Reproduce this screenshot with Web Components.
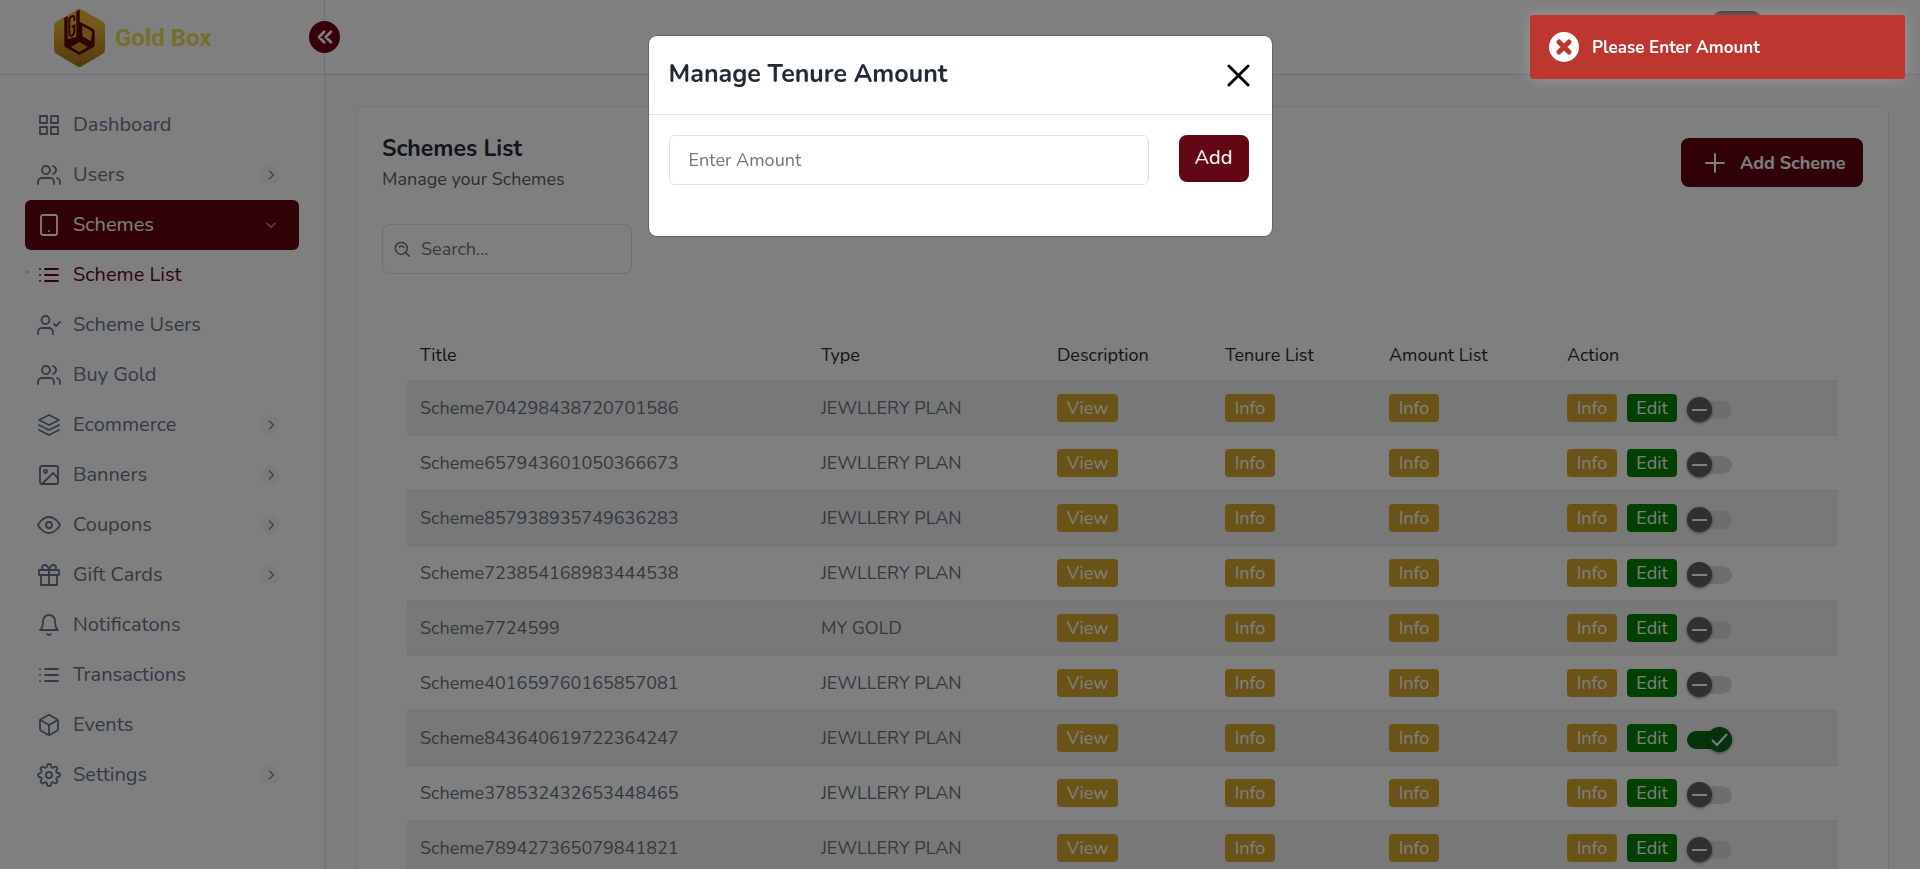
<!DOCTYPE html>
<html lang="en">
<head>
<meta charset="utf-8">
<title>Gold Box - Schemes</title>
<style>
  html, body { margin: 0; height: 100%; }
  body { font-family: Nunito, Lato, sans-serif; font-size: 18px; background: #fafafe; overflow: hidden; }
</style>
</head>
<body>
<gold-app></gold-app>
<script>
const ICONS = {
  grid: '<rect x="3" y="3" width="7" height="7"/><rect x="14" y="3" width="7" height="7"/><rect x="14" y="14" width="7" height="7"/><rect x="3" y="14" width="7" height="7"/>',
  users: '<path d="M17 21v-2a4 4 0 0 0-4-4H5a4 4 0 0 0-4 4v2"/><circle cx="9" cy="7" r="4"/><path d="M23 21v-2a4 4 0 0 0-3-3.87M16 3.13a4 4 0 0 1 0 7.75"/>',
  tablet: '<rect x="4" y="2" width="16" height="20" rx="2"/><path d="M12 18h.01"/>',
  list: '<path d="M8 6h13M8 12h13M8 18h13M3 6h.01M3 12h.01M3 18h.01"/>',
  usercheck: '<path d="M16 21v-2a4 4 0 0 0-4-4H5a4 4 0 0 0-4 4v2"/><circle cx="8.5" cy="7" r="4"/><path d="M17 11l2 2 4-4"/>',
  layers: '<path d="M12 2L2 7l10 5 10-5-10-5zM2 17l10 5 10-5M2 12l10 5 10-5"/>',
  image: '<rect x="3" y="3" width="18" height="18" rx="2"/><circle cx="8.5" cy="8.5" r="1.5"/><path d="M21 15l-5-5L5 21"/>',
  eye: '<path d="M1 12s4-8 11-8 11 8 11 8-4 8-11 8-11-8-11-8z"/><circle cx="12" cy="12" r="3"/>',
  gift: '<path d="M20 12v10H4V12M2 7h20v5H2zM12 22V7M12 7H7.5a2.5 2.5 0 0 1 0-5C11 2 12 7 12 7zM12 7h4.5a2.5 2.5 0 0 0 0-5C13 2 12 7 12 7z"/>',
  bell: '<path d="M18 8A6 6 0 0 0 6 8c0 7-3 9-3 9h18s-3-2-3-9M13.73 21a2 2 0 0 1-3.46 0"/>',
  box: '<path d="M21 16V8a2 2 0 0 0-1-1.73l-7-4a2 2 0 0 0-2 0l-7 4A2 2 0 0 0 3 8v8a2 2 0 0 0 1 1.73l7 4a2 2 0 0 0 2 0l7-4A2 2 0 0 0 21 16z"/><path d="M3.27 6.96L12 12.01l8.73-5.05M12 22.08V12"/>',
  settings: '<circle cx="12" cy="12" r="3"/><path d="M19.4 15a1.65 1.65 0 0 0 .33 1.82l.06.06a2 2 0 1 1-2.83 2.83l-.06-.06a1.65 1.65 0 0 0-1.82-.33 1.65 1.65 0 0 0-1 1.51V21a2 2 0 0 1-4 0v-.09A1.65 1.65 0 0 0 9 19.4a1.65 1.65 0 0 0-1.82.33l-.06.06a2 2 0 1 1-2.83-2.83l.06-.06a1.65 1.65 0 0 0 .33-1.82 1.65 1.65 0 0 0-1.51-1H3a2 2 0 0 1 0-4h.09A1.65 1.65 0 0 0 4.6 9a1.65 1.65 0 0 0-.33-1.82l-.06-.06a2 2 0 1 1 2.83-2.83l.06.06a1.65 1.65 0 0 0 1.82.33H9a1.65 1.65 0 0 0 1-1.51V3a2 2 0 0 1 4 0v.09a1.65 1.65 0 0 0 1 1.51 1.65 1.65 0 0 0 1.82-.33l.06-.06a2 2 0 1 1 2.83 2.83l-.06.06a1.65 1.65 0 0 0-.33 1.82V9a1.65 1.65 0 0 0 1.51 1H21a2 2 0 0 1 0 4h-.09a1.65 1.65 0 0 0-1.51 1z"/>',
  plus: '<path d="M12 3v18M3 12h18"/>',
  close: '<path d="M2 2l20 20M22 2L2 22"/>',
  right: '<path d="M9 5l7 7-7 7"/>',
  down: '<path d="M5 9l7 7 7-7"/>',
  dleft: '<path d="M11 5l-7 7 7 7M20 5l-7 7 7 7"/>',
  search: '<circle cx="11" cy="11" r="9"/><path d="M17.5 17.5L23 23M8 9q4-4 7 1"/>'
};

function define(name, css, html, setup) {
  const template = document.createElement('template');
  template.innerHTML = `<style>*{box-sizing:border-box}${css}</style>${html}`;
  customElements.define(name, class extends HTMLElement {
    connectedCallback() {
      if (this.shadowRoot) return;
      const root = this.attachShadow({ mode: 'open' });
      root.append(template.content.cloneNode(true));
      if (setup) setup(this, root);
    }
  });
}

/* Line icon: name, size and stroke attributes */
define('line-icon', ':host{display:inline-flex;flex:none}svg{fill:none;stroke:currentColor;stroke-linecap:round;stroke-linejoin:round}',
  '<svg viewBox="0 0 24 24" aria-hidden="true"></svg>', (el, root) => {
    const svg = root.querySelector('svg');
    const size = el.getAttribute('size') || 24;
    svg.setAttribute('width', size);
    svg.setAttribute('height', size);
    svg.setAttribute('stroke-width', el.getAttribute('stroke') || 1.8);
    svg.innerHTML = ICONS[el.getAttribute('name')];
  });

define('brand-logo', `
  :host{display:block}
  a{display:flex;align-items:center;gap:10px;color:#ecdc58;text-decoration:none;font:700 24px/28px Roboto,sans-serif}
  `, `<a href="#"><svg width="51" height="58" viewBox="0 0 153 174" aria-hidden="true">
    <defs><linearGradient id="g" x1="0" y1="0" x2="0" y2="1"><stop offset="0" stop-color="#edb233"/><stop offset=".25" stop-color="#e9b636"/><stop offset="1" stop-color="#a87418"/></linearGradient></defs>
    <path fill="url(#g)" d="M67 4Q76-2 86 4L144 37Q153 42 153 52V121Q153 131 144 136L86 170Q76 177 67 170L9 136Q0 131 0 121V52Q0 42 9 37Z"/>
    <path fill="#620713" d="M31 27L41 21V90L67 84V8L77 0V38L118 60Q122 63 122 68V108Q122 113 118 115L80 136Q76 139 72 136L35 115Q31 113 31 108Z"/>
    <path fill="#d9a32e" d="M85 50L111 65Q114 67 114 70L111 96L88 84Q85 82 85 78Z"/>
    <path fill="#bd8a24" d="M76 99L101 114L76 129L51 114Z"/>
    <path fill="none" stroke="#620713" stroke-width="6" d="M61 36V28Q61 18 53 22Q46 26 46 34V72Q46 84 54 80Q61 76 61 66V50L53 54"/>
  </svg><span>Gold Box</span></a>`);

define('nav-item', `
  :host{display:block}
  a{display:flex;align-items:center;height:50px;padding:0 19px 0 12px;border-radius:6px;color:#64748b;text-decoration:none;font-size:20px;line-height:24px;gap:12px;position:relative}
  span{flex:1}
  i{display:flex;align-items:center;justify-content:center;width:20px;height:20px;border-radius:50%;background:#f7f7f7;padding-left:2px}
  :host([sub]) a{color:#620713}
  :host([sub]) a::before{content:"";position:absolute;left:0;top:20px;width:4px;height:4px;border-radius:50%;background:#fe9f43;opacity:.5}
  :host([active]) a{background:#620713;color:#fff}
  :host([active]) i{background:none;color:#fe9f43}
  `, '<a href="#"><span><slot></slot></span></a>', (el, root) => {
    const link = root.querySelector('a');
    link.insertAdjacentHTML('afterbegin', `<line-icon name="${el.getAttribute('icon')}"></line-icon>`);
    if (el.hasAttribute('more'))
      link.insertAdjacentHTML('beforeend', `<i><line-icon size="14" stroke="2" name="${el.hasAttribute('active') ? 'down' : 'right'}"></line-icon></i>`);
  });

define('side-bar', `
  :host{display:block;background:#fff;border-right:1px solid #e0e3e6}
  nav{padding:25px}
  `, `<nav>
    <nav-item icon="grid">Dashboard</nav-item>
    <nav-item icon="users" more>Users</nav-item>
    <nav-item icon="tablet" more active>Schemes</nav-item>
    <nav-item icon="list" sub>Scheme List</nav-item>
    <nav-item icon="usercheck">Scheme Users</nav-item>
    <nav-item icon="users">Buy Gold</nav-item>
    <nav-item icon="layers" more>Ecommerce</nav-item>
    <nav-item icon="image" more>Banners</nav-item>
    <nav-item icon="eye" more>Coupons</nav-item>
    <nav-item icon="gift" more>Gift Cards</nav-item>
    <nav-item icon="bell">Notificatons</nav-item>
    <nav-item icon="list">Transactions</nav-item>
    <nav-item icon="box">Events</nav-item>
    <nav-item icon="settings" more>Settings</nav-item>
  </nav>`);

define('top-bar', `
  :host{display:flex;height:75px;background:#fff;border-bottom:1px solid #d8dbde}
  .brand{position:relative;width:325px;border-right:1px solid #e0e3e6;padding:9px 0 0 54px}
  button{position:absolute;right:-16px;top:21px;width:31px;height:32px;border:0;border-radius:50%;padding:0;background:#700214;color:#fff;display:flex;align-items:center;justify-content:center}
  .user{margin:11px 158px 0 auto;width:50px;height:50px;border-radius:10px;background:#6e3238}
  `, `<div class="brand"><brand-logo></brand-logo><button aria-label="Collapse menu"><line-icon name="dleft" size="18" stroke="3.6"></line-icon></button></div><div class="user"></div>`);

define('tag-button', `
  :host{display:inline-block;width:50px}
  :host([wide]){width:61px}
  button{display:block;width:100%;height:28px;border:0;border-radius:4px;padding:0;background:#d4a72f;color:#fff;font:inherit;line-height:28px}
  :host([green]) button{background:#008000}
  `, '<button><slot></slot></button>');

define('toggle-switch', `
  :host{display:block;padding-top:4px}
  label{display:flex;align-items:center;position:relative;width:45px;height:26px}
  input{appearance:none;margin:0;width:45px;height:18px;border-radius:9px;background:#dcdcdc}
  input:checked{background:#086819}
  b{position:absolute;left:0;width:25px;height:25px;border-radius:50%;background:#606060;box-shadow:0 1px 3px rgba(0,0,0,.5);color:#fff;display:flex;align-items:center;justify-content:center}
  input:checked + b{left:20px;background:#0b6419}
  path{fill:none;stroke:#fff;stroke-width:2}
  .on,input:checked + b .off{display:none}
  input:checked + b .on{display:block}
  `, `<label><input type="checkbox" role="switch" aria-label="Scheme active"><b><svg width="19" height="19" viewBox="0 0 19 19" aria-hidden="true"><path class="off" d="M2 10h15"/><path class="on" d="M2 10l5 5L17 4"/></svg></b></label>`,
  (el, root) => { root.querySelector('input').checked = el.hasAttribute('on'); });

define('scheme-table', `
  :host{display:block}
  table{width:100%;table-layout:fixed;border-collapse:collapse}
  th{height:50px;font-weight:400;color:#212b36;text-align:left;padding:0 13px}
  td{height:55px;padding:0 13px;color:#637381;border-top:1px solid #e4e7e9}
  tbody tr:nth-child(odd){background:#f1f1f1}
  div{display:flex;align-items:center;gap:10px;height:30px}
  `, `<table><colgroup><col style="width:401px"><col style="width:236px"><col style="width:168px"><col style="width:164px"><col style="width:178px"><col style="width:284px"></colgroup>
  <thead><tr><th>Title</th><th>Type</th><th>Description</th><th>Tenure List</th><th>Amount List</th><th>Action</th></tr></thead><tbody></tbody></table>`,
  (el, root) => {
    const rows = ['704298438720701586', '657943601050366673', '857938935749636283', '723854168983444538', '7724599', '401659760165857081', '843640619722364247', '378532432653448465', '789427365079841821'];
    root.querySelector('tbody').innerHTML = rows.map((id, i) => `<tr><td>Scheme${id}</td><td>${i === 4 ? 'MY GOLD' : 'JEWLLERY PLAN'}</td>
      <td><div><tag-button wide>View</tag-button></div></td><td><div><tag-button>Info</tag-button></div></td><td><div><tag-button>Info</tag-button></div></td>
      <td><div><tag-button>Info</tag-button><tag-button green>Edit</tag-button><toggle-switch ${i === 6 ? 'on' : ''}></toggle-switch></div></td></tr>`).join('');
  });

define('scheme-card', `
  :host{display:block;background:#fff;border:1px solid #e8ebed;border-radius:8px;padding:31px 25px}
  header{display:flex;justify-content:space-between;align-items:flex-start}
  h1{margin:0;font-size:23px;line-height:22px;font-weight:700;color:#212b36}
  p{margin:7px 0 0;line-height:24px;color:#595b5d}
  .add{width:182px;height:49px;border:0;border-radius:8px;background:#620713;color:#fff;font:inherit;font-weight:700;white-space:nowrap;display:flex;align-items:center;gap:13px;padding:0 0 0 22px}
  .search{display:flex;align-items:center;width:250px;height:50px;margin-top:33px;border:1px solid #dbe0e6;border-radius:8px;padding-left:11px;gap:11px;color:#5b6670}
  input{flex:1;min-width:0;border:0;outline:0;background:none;font:inherit;padding:0}
  input::placeholder{color:#6c7580}
  scheme-table{margin:56px 25px 0}
  `, `<header><div><h1>Schemes List</h1><p>Manage your Schemes</p></div><button class="add"><line-icon name="plus" size="24" stroke="2"></line-icon>Add Scheme</button></header>
  <label class="search"><line-icon name="search" size="16" stroke="2"></line-icon><input type="search" placeholder="Search..." aria-label="Search"></label>
  <scheme-table></scheme-table>`);

define('amount-modal', `
  :host{position:fixed;inset:0;display:flex;justify-content:center;align-items:flex-start;background:rgba(0,0,0,.5);padding-top:35px}
  section{width:625px;height:202px;background:#fff;background-clip:padding-box;border:1px solid rgba(0,0,0,.2);border-radius:9px}
  header{display:flex;justify-content:space-between;align-items:center;height:79px;padding:0 22px 0 20px;border-bottom:1px solid #dee2e6}
  h2{margin:0;padding-bottom:2px;font-size:25px;line-height:30px;font-weight:700;color:#212b36}
  .close{border:0;background:none;padding:0;color:#000;display:flex}
  form{display:flex;align-items:flex-start;gap:30px;padding:20px 23px 0 20px}
  input{flex:1;min-width:0;height:50px;border:1px solid #dbe0e6;border-radius:6px;padding:0 19px;font:inherit;outline:0}
  input::placeholder{color:#757575}
  .add{width:70px;height:47px;border:0;border-radius:8px;background:#620713;color:#fff;font:inherit;font-size:20px;padding:0 0 2px}
  `, `<section role="dialog" aria-label="Manage Tenure Amount"><header><h2>Manage Tenure Amount</h2><button class="close" aria-label="Close"><line-icon name="close" size="23" stroke="3"></line-icon></button></header>
  <form><input type="text" placeholder="Enter Amount" aria-label="Enter Amount"><button type="button" class="add">Add</button></form></section>`);

define('toast-message', `
  :host{position:fixed;top:15px;right:15px;width:375px;height:64px;border-radius:3px;background:#bd362f;color:#fff;box-shadow:0 0 15px #999;display:flex;align-items:center;gap:13px;padding-left:19px;font-size:17px;font-weight:700}
  svg{flex:none}
  `, `<svg width="30" height="30" viewBox="0 0 30 30" aria-hidden="true"><circle cx="15" cy="15" r="15" fill="#fff"/><path d="M10 10l10 10M20 10L10 20" stroke="#bd362f" stroke-width="5" stroke-linecap="round"/></svg><span role="alert"><slot></slot></span>`);

define('gold-app', `
  :host{display:grid;grid-template:75px 1fr / 325px 1fr;height:100vh;overflow:hidden}
  top-bar{grid-column:1 / -1}
  main{min-width:0;min-height:0;padding:31px 31px 0;overflow:hidden}
  `, `<top-bar></top-bar><side-bar></side-bar><main><scheme-card></scheme-card></main><amount-modal></amount-modal><toast-message>Please Enter Amount</toast-message>`);
</script>
</body>
</html>
